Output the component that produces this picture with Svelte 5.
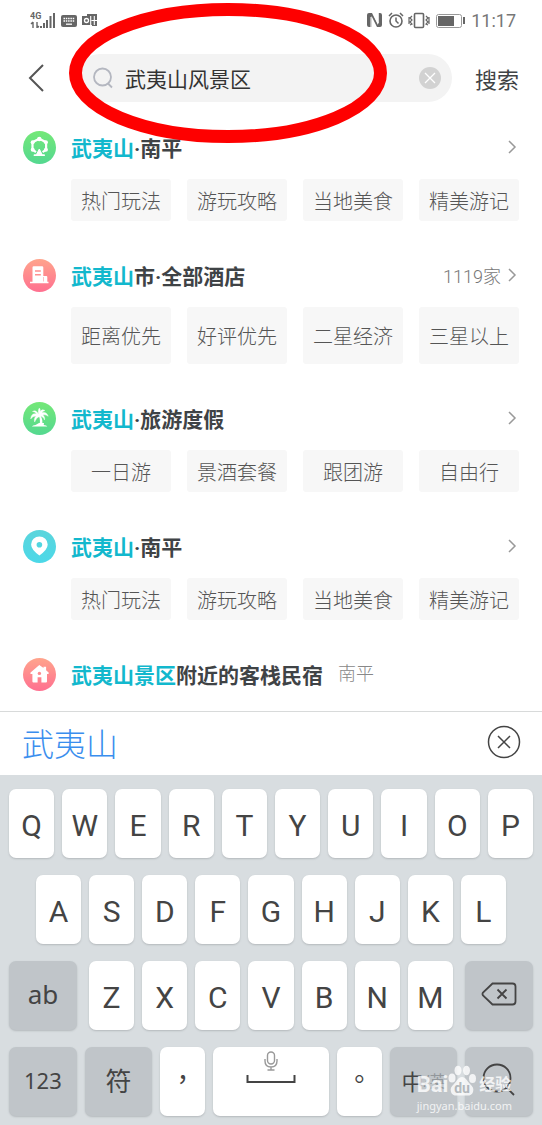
<script lang="ts">
  type Icon = 'wheel' | 'hotel' | 'palm' | 'pin' | 'house';

  type Section = {
    icon: Icon;
    match: string;
    rest: string;
    place?: string;
    count?: string;
    arrow: boolean;
    tall?: boolean;
    chips: string[];
  };

  const sections: Section[] = [
    { icon: 'wheel', match: '武夷山', rest: '·南平', arrow: true, chips: ['热门玩法', '游玩攻略', '当地美食', '精美游记'] },
    {
      icon: 'hotel',
      match: '武夷山',
      rest: '市·全部酒店',
      count: '1119家',
      arrow: true,
      tall: true,
      chips: ['距离优先', '好评优先', '二星经济', '三星以上']
    },
    { icon: 'palm', match: '武夷山', rest: '·旅游度假', arrow: true, chips: ['一日游', '景酒套餐', '跟团游', '自由行'] },
    { icon: 'pin', match: '武夷山', rest: '·南平', arrow: true, chips: ['热门玩法', '游玩攻略', '当地美食', '精美游记'] },
    { icon: 'house', match: '武夷山景区', rest: '附近的客栈民宿', place: '南平', arrow: false, chips: [] }
  ];

  const topRow = [...'QWERTYUIOP'];
  const homeRow = [...'ASDFGHJKL'];
  const lowRow = [...'ZXCVBNM'];

  let query = $state('武夷山风景区');
</script>

<div class="screen">
  <div class="status">
    <svg class="status-left" width="70" height="18" viewBox="0 0 70 18" fill="#666">
      <text x="0" y="8" font-size="9" font-weight="700">4G</text>
      <path d="M3 11v6M1 13l2-2M7 11v6M7 15l2 1" stroke="#666" stroke-width="1.4" fill="none" />
      <path d="M10 15h2v2h-2zM13 12h2v5h-2zM16 9h2v8h-2zM19.500 5h2v12h-2zM23 2h2v15h-2z" />
      <rect x="31" y="4" width="16" height="12" rx="2" />
      <path d="M33.500 7.500h11M33.500 10h11" stroke="#fff" stroke-width="1.300" stroke-dasharray="1.500 .8" />
      <path d="M36 13.200h6" stroke="#fff" stroke-width="1.300" />
      <path d="M57 3h10v12h-5v-1H52V5h5z" />
      <circle cx="56.500" cy="9.500" r="2" fill="none" stroke="#fff" stroke-width="1.300" />
      <path d="M61.500 9.500h5.500M64.300 5v9M60.700 5v9" stroke="#fff" stroke-width="1.100" />
    </svg>
    <svg width="100" height="18" viewBox="0 0 100 18" fill="none" stroke="#666">
      <path d="M3 2h3l6 12V2h2q2 0 2 2v10q0 2-2 2h-3L5.500 5v11H3q-2 0-2-2V4q0-2 2-2z" fill="#666" stroke="none" />
      <path d="M7.200 2l5 10.500M5 6v10M12.300 2v10" stroke="#fff" stroke-width="1" />
      <circle cx="30" cy="10" r="6" stroke-width="1.600" />
      <path d="M30 6.500V10l2.500 2.500M23 5l3-3M37 5l-3-3" stroke-width="1.500" />
      <rect x="48.500" y="2.500" width="9" height="14" rx="1" stroke-width="1.600" />
      <path d="M46 5l-2 2 2 2-2 2 2 2-2 1M43 6v7M60 5l2 2-2 2 2 2-2 2 2 1M63 6v7" stroke-width="1.200" />
      <rect x="70.500" y="3.500" width="25" height="13" rx="2" stroke="#999" />
      <rect x="72" y="5" width="16" height="10" fill="#666" stroke="none" />
      <path d="M98 6v7" stroke-width="2" />
    </svg>
    <span class="clock">11:17</span>
  </div>

  <form class="search" onsubmit={(e) => e.preventDefault()}>
    <button type="button" class="back" aria-label="返回">
      <svg width="18" height="30" viewBox="0 0 18 30"><path d="M15 2L2 15l13 13" fill="none" stroke="#555" stroke-width="2" /></svg>
    </button>
    <div class="field">
      <svg width="20" height="22" viewBox="0 0 20 22" fill="none" stroke="#b4b7c0" stroke-width="1.800">
        <circle cx="9.500" cy="10" r="8.500" />
        <path d="M15 16.500l4 4" />
      </svg>
      <input type="text" aria-label="搜索" bind:value={query} />
      <button type="button" class="clear" aria-label="清除" onclick={() => (query = '')}>
        <svg width="22" height="22" viewBox="0 0 22 22">
          <circle cx="11" cy="11" r="11" fill="#d2d2d2" />
          <path d="M6 6l10 10M16 6L6 16" stroke="#fff" stroke-width="1.300" />
        </svg>
      </button>
    </div>
    <button type="submit" class="submit">搜索</button>
  </form>

  <svg class="marker" width="318" height="140" viewBox="0 0 318 140">
    <ellipse cx="159" cy="70" rx="152.500" ry="63.500" fill="none" stroke="#fe0000" stroke-width="13" />
  </svg>

  <main>
    <svg class="defs" width="0" height="0">
      <linearGradient id="green" x2="0" y2="1"><stop stop-color="#74e878" /><stop offset="1" stop-color="#54d890" /></linearGradient>
      <linearGradient id="red" x2="0" y2="1"><stop stop-color="#ffa48c" /><stop offset="1" stop-color="#ff7090" /></linearGradient>
      <linearGradient id="blue" x2="0" y2="1"><stop stop-color="#5bd5dc" /><stop offset="1" stop-color="#4bd8e8" /></linearGradient>
    </svg>
    {#each sections as section}
      <section>
        <button type="button" class="head">
          <svg width="33" height="33" viewBox="0 0 33 33" fill="#fff">
            {#if section.icon === 'wheel'}
              <circle cx="16.500" cy="16.500" r="16.500" fill="url(#green)" />
              <path d="M13 21.200l-3.500-2.500v-7.500l6.800-3.500 6.800 3.500v7.500l-3.500 2.500" fill="none" stroke="#fff" stroke-width="2.200" />
              <circle cx="16.300" cy="8" r="2.200" /><circle cx="9.700" cy="11.200" r="2" /><circle cx="22.900" cy="11.200" r="2" />
              <circle cx="9.700" cy="18.700" r="2" /><circle cx="22.900" cy="18.700" r="2" />
              <path d="M16.300 18l-2.800 5.500h5.600z" stroke="#fff" stroke-linejoin="round" />
              <path d="M11.500 24.200h9.600" stroke="#fff" stroke-width="1.800" stroke-linecap="round" />
            {:else if section.icon === 'hotel'}
              <circle cx="16.500" cy="16.500" r="16.500" fill="url(#red)" />
              <path d="M9.500 8.500q0-1.200 1.200-1.200h8.400q1.200 0 1.200 1.200V17h3q1 0 1 1v4.700h1.200v1.600H7v-1.600h2.500z" />
              <path d="M12 12h5.800M12 15.800h5.800" stroke="#ff8f90" stroke-width="1.400" />
              <path d="M20.500 18v4.500" stroke="#ff8090" stroke-width=".5" />
            {:else if section.icon === 'palm'}
              <circle cx="16.500" cy="16.500" r="16.500" fill="url(#green)" />
              <path d="M16 12c2.300 2 3.800 5.500 3.400 9.500h-2.600c.4-3.500 0-6.500-1.800-9z" />
              <path d="M15.500 12.500C14 9 12 8 9.500 9.500c2 0 3 1 4 2.500-3.500-1-5.500 1-5.800 5 1.800-2.500 3.300-3 5.300-2.800-1.700 1.600-2 3.600-1.300 5.800.8-2.400 2.300-4.400 4.800-5.600 2.500-.3 4 .9 5 3.600.5-2-.1-3.700-1.700-5 1.700-.4 3.300 0 5.400 1.200-1-3.200-3.500-4.500-6.200-3.300.8-1.500 1.600-2.100 3-2.300-2-1.300-3.700-.8-4.700 1 .1-1.800-.2-2.700-1-3.500-1 1.500-1.300 3.500-.8 6.300z" stroke="#fff" stroke-width=".4" />
              <path d="M8.800 24.600q1-1.600 3.700-1.700l3.500-2h5l-.3 2q3 .1 3.600 1.700z" />
            {:else if section.icon === 'pin'}
              <circle cx="16.500" cy="16.500" r="16.500" fill="url(#blue)" />
              <path d="M16.400 25.600q-8.300-6-8.300-11a8.300 8.100 0 0 1 16.600 0q0 5-8.300 11z" />
              <circle cx="16.400" cy="14.800" r="2.800" fill="#52d6e0" />
            {:else}
              <circle cx="16.500" cy="16.500" r="16.500" fill="url(#red)" />
              <path d="M16.300 7l4.200 3V8.700h2.600v3.500l2.500 2.300q.8 1.500-1.600 1.500v7.500q0 1-1 1h-4.600v-5.300h-3.800v5.300h-4.200q-1 0-1-1V16q-3 0-1.800-1.500z" />
              <circle cx="16.400" cy="15.400" r="1.700" fill="#ff8a90" />
            {/if}
          </svg>
          <span class="title"><em>{section.match}</em>{section.rest}</span>
          {#if section.place}<span class="place">{section.place}</span>{/if}
          {#if section.count}<span class="count">{section.count}</span>{/if}
          {#if section.arrow}
            <svg class="arrow" width="10" height="14" viewBox="0 0 10 14"><path d="M2 1l6 6-6 6" fill="none" stroke="#999" stroke-width="1.500" /></svg>
          {/if}
        </button>
        {#if section.chips.length}
          <div class="chips" class:tall={section.tall}>
            {#each section.chips as chip}
              <button type="button">{chip}</button>
            {/each}
          </div>
        {/if}
      </section>
    {/each}
  </main>

  <div class="candidates">
    <button type="button" class="word">武夷山</button>
    <button type="button" class="dismiss" aria-label="关闭">
      <svg width="34" height="34" viewBox="0 0 34 34" fill="none" stroke="#444" stroke-width="1.500">
        <circle cx="17" cy="17" r="15.500" />
        <path d="M11 11l12 12M23 11L11 23" />
      </svg>
    </button>
  </div>

  <div class="keyboard">
    <div class="row">
      {#each topRow as key}<button type="button" class="key">{key}</button>{/each}
    </div>
    <div class="row inset">
      {#each homeRow as key}<button type="button" class="key">{key}</button>{/each}
    </div>
    <div class="row">
      <button type="button" class="key fn">ab</button>
      <div class="letters">
        {#each lowRow as key}<button type="button" class="key">{key}</button>{/each}
      </div>
      <button type="button" class="key fn" aria-label="删除">
        <svg width="36" height="24" viewBox="0 0 36 24" fill="none" stroke="#444" stroke-width="1.800">
          <path d="M11.500 1.500h20q3 0 3 3v15q0 3-3 3h-20L2 13.500q-1-1.500 0-3z" />
          <path d="M16.500 7.500l9 9M25.500 7.500l-9 9" />
        </svg>
      </button>
    </div>
    <div class="row">
      <button type="button" class="key fn num">123</button>
      <button type="button" class="key fn">符</button>
      <button type="button" class="key mark">，</button>
      <button type="button" class="key space" aria-label="空格">
        <svg width="50" height="34" viewBox="0 0 50 34" fill="none">
          <g stroke="#999" stroke-width="1.400">
            <rect x="21.500" y="1" width="7" height="12" rx="3.500" />
            <path d="M19 8v2q0 6 6 6t6-6V8M25 16v3M21.500 19h7" />
          </g>
          <path d="M1.500 24v7h47v-7" stroke="#444" stroke-width="2" />
        </svg>
      </button>
      <button type="button" class="key mark">。</button>
      <button type="button" class="key fn lang">中<small>/英</small></button>
      <button type="button" class="key fn" aria-label="搜索">
        <svg width="34" height="34" viewBox="0 0 34 34" fill="none" stroke="#444" stroke-width="1.800">
          <circle cx="15" cy="15" r="13.500" />
          <path d="M24 24l8 8" />
        </svg>
      </button>
    </div>
  </div>

  <div class="watermark">
    <div class="brand">
      <span>Bai</span>
      <svg width="28" height="32" viewBox="0 0 28 32" fill="#fff">
        <ellipse cx="4" cy="13" rx="3.500" ry="4.500" />
        <ellipse cx="10" cy="5.500" rx="3.500" ry="4.800" />
        <ellipse cx="18.500" cy="5.500" rx="3.500" ry="4.800" />
        <ellipse cx="24.500" cy="13.500" rx="3.500" ry="4.500" />
        <path d="M14 12c4 0 5 4 8 7 3 2.500 4 5 3 8s-4 4-6.500 3.500h-9C7 31 4 30 3 27s0-5.500 3-8c3-3 4-7 8-7z" />
        <text x="14" y="28" text-anchor="middle" font-size="14" font-weight="700" fill="#aeb3b7">du</text>
      </svg>
      <span class="cn">经验</span>
    </div>
    <div class="url">jingyan.baidu.com</div>
  </div>
</div>

<style>
  :global(body) {
    background: #fff;
  }

  .screen {
    position: relative;
    font-family: Roboto, 'Noto Sans CJK SC', sans-serif;
    color: #3f4346;
    overflow: hidden;
  }

  button {
    appearance: none;
    margin: 0;
    padding: 0;
    border: 0;
    background: none;
    color: inherit;
    font: inherit;
    cursor: pointer;
  }

  svg {
    display: block;
    flex: none;
  }

  .status {
    display: flex;
    align-items: center;
    height: 40px;
    padding: 0 26px 0 30px;
  }

  .status-left {
    margin-right: auto;
  }

  .clock {
    margin-left: 5px;
    font-size: 18px;
    color: #777;
  }

  .search {
    display: flex;
    align-items: center;
    height: 76px;
    padding: 0 23px 0 28px;
  }

  .back {
    margin-right: 30px;
  }

  .field {
    flex: 1;
    display: flex;
    align-items: center;
    min-width: 0;
    height: 48px;
    padding: 0 11px 0 17px;
    border-radius: 24px;
    background: #f3f3f3;
  }

  .field input {
    flex: 1;
    min-width: 0;
    margin-left: 12px;
    padding: 0;
    border: 0;
    outline: 0;
    background: none;
    color: #333;
    font: inherit;
    font-size: 21px;
  }

  .submit {
    margin-left: 23px;
    font-size: 22px;
  }

  .marker {
    position: absolute;
    top: 3px;
    left: 69px;
    pointer-events: none;
  }

  main {
    padding: 10px 23px 16px;
  }

  .defs {
    position: absolute;
  }

  section {
    padding-bottom: 33px;
  }

  section:last-child {
    padding-bottom: 0;
  }

  .head {
    display: flex;
    align-items: center;
    width: 100%;
    height: 42px;
    text-align: left;
  }

  .title {
    margin-left: 15px;
    font-size: 21px;
    font-weight: 700;
  }

  .title em {
    color: #12b8cd;
    font-style: normal;
  }

  .place {
    margin-left: 15px;
    padding-bottom: 4px;
    font-size: 18px;
    font-weight: 300;
    color: #888;
  }

  .count {
    margin-left: auto;
    font-size: 18px;
    font-weight: 300;
    color: #777;
  }

  .arrow {
    margin-left: auto;
    margin-right: 2px;
  }

  .count + .arrow {
    margin-left: 6px;
  }

  .chips {
    display: grid;
    grid-template-columns: repeat(4, 1fr);
    gap: 16px;
    margin: 11px 0 0 48px;
  }

  .chips button {
    height: 42px;
    border-radius: 3px;
    background: #f7f7f7;
    color: #555;
    font-size: 20px;
    font-weight: 300;
  }

  .chips.tall button {
    height: 57px;
  }

  .candidates {
    display: flex;
    align-items: center;
    justify-content: space-between;
    height: 59px;
    padding: 0 21px 4px 22px;
    border-top: 1px solid #d8dada;
  }

  .word {
    font-size: 32px;
    font-weight: 300;
    color: #3a8eee;
  }

  .keyboard {
    display: grid;
    gap: 17px;
    padding: 14px 9px 9px;
    background: #d8dde0;
  }

  .row,
  .letters {
    display: flex;
    gap: 8px;
  }

  .inset {
    padding: 0 27px;
  }

  .letters {
    flex: 364;
    margin: 0 4px;
  }

  .key {
    display: flex;
    align-items: center;
    justify-content: center;
    flex: 45 1 0;
    height: 69px;
    padding-top: 4px;
    border-radius: 7px;
    background: #fff;
    box-shadow: 0 1px 2px #b4b9bc;
    color: #444;
    font-size: 30px;
  }

  .fn {
    flex-grow: 68;
    padding: 0 0 4px;
    background: #c0c5c9;
    font-family: 'Noto Sans', 'Noto Sans CJK SC', sans-serif;
    font-size: 26px;
  }

  .num {
    font-size: 22px;
  }

  .mark {
    padding: 0 0 8px;
    font-family: 'Noto Sans CJK TC', sans-serif;
    font-size: 26px;
  }

  .space {
    flex-grow: 116;
    align-items: flex-start;
  }

  .lang {
    font-size: 22px;
  }

  .lang small {
    font-size: 16px;
    color: #92979b;
  }

  .watermark {
    position: absolute;
    right: 30px;
    bottom: 10px;
    color: #fff;
    opacity: 0.8;
    pointer-events: none;
  }

  .brand {
    display: flex;
    align-items: flex-end;
    font-size: 22px;
    font-weight: 700;
    line-height: 24px;
  }

  .cn {
    margin-left: 3px;
    font-size: 16px;
  }

  .url {
    font-family: 'Noto Sans', sans-serif;
    font-size: 11px;
    line-height: 18px;
  }
</style>
